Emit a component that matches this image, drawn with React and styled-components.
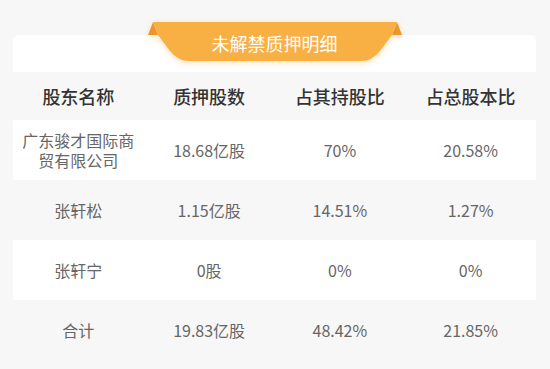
import React from 'react';
import styled, { createGlobalStyle } from 'styled-components';

const GlobalStyle = createGlobalStyle`
  html, body {
    margin: 0;
    padding: 0;
    background: #f7f7f7;
  }
  body {
    font-family: "Noto Sans CJK SC", "Noto Sans", sans-serif;
  }
`;

const Page = styled.div`
  padding: 35px 14px 0 13px;
`;

const Card = styled.div`
  display: flex;
  flex-direction: column;
`;

const TitleBar = styled.div`
  position: relative;
  height: 37px;
  background: #ffffff;
  border-radius: 6px 6px 0 0;
`;

const Ribbon = styled.div`
  position: absolute;
  left: 50%;
  top: -13px;
  width: 256px;
  height: 40px;
  transform: translateX(-50%);
`;

const RibbonShape = styled.svg`
  position: absolute;
  left: 0;
  top: 0;
  overflow: visible;
  filter: drop-shadow(0 2px 3px rgba(248, 170, 60, 0.35));
`;

const RibbonText = styled.div`
  position: relative;
  display: flex;
  justify-content: center;
  padding-top: 1px;
  line-height: 40px;
  font-size: 18px;
  color: #ffffff;
  letter-spacing: 0;
`;

const Row = styled.div`
  display: grid;
  grid-template-columns: repeat(4, 1fr);
  align-items: center;
  height: ${(p) => p.$height}px;
  background: ${(p) => (p.$white ? '#ffffff' : 'transparent')};
`;

const Cell = styled.div`
  text-align: center;
  padding: 0 8px;
  font-size: 16px;
  line-height: 20px;
  color: #666666;
`;

const HeadCell = styled(Cell)`
  font-size: 18px;
  line-height: 24px;
  font-weight: 500;
  color: #333333;
`;

const headers = ['股东名称', '质押股数', '占其持股比', '占总股本比'];

const rows = [
  ['广东骏才国际商贸有限公司', '18.68亿股', '70%', '20.58%'],
  ['张轩松', '1.15亿股', '14.51%', '1.27%'],
  ['张轩宁', '0股', '0%', '0%'],
  ['合计', '19.83亿股', '48.42%', '21.85%'],
];

function TitleRibbon({ children }) {
  return (
    <Ribbon>
      <RibbonShape width="256" height="40" viewBox="0 0 256 40">
        <polygon points="1,13 6,0 11,13" fill="#ec962c" />
        <polygon points="255,13 250,0 245,13" fill="#ec962c" />
        <path
          d="M6 0 H250 Q247 6 245 13 L233 29 Q225 39 214 39 H42 Q31 39 23 29 L11 13 Q9 6 6 0 Z"
          fill="#f8af43"
        />
      </RibbonShape>
      <RibbonText>{children}</RibbonText>
    </Ribbon>
  );
}

export default function App() {
  return (
    <Page>
      <GlobalStyle />
      <Card>
        <TitleBar>
          <TitleRibbon>未解禁质押明细</TitleRibbon>
        </TitleBar>
        <Row $height={48}>
          {headers.map((h) => (
            <HeadCell key={h}>{h}</HeadCell>
          ))}
        </Row>
        {rows.map((r, i) => (
          <Row key={r[0]} $height={60} $white={i % 2 === 0}>
            {r.map((c, j) => (
              <Cell key={j}>{c}</Cell>
            ))}
          </Row>
        ))}
      </Card>
    </Page>
  );
}
